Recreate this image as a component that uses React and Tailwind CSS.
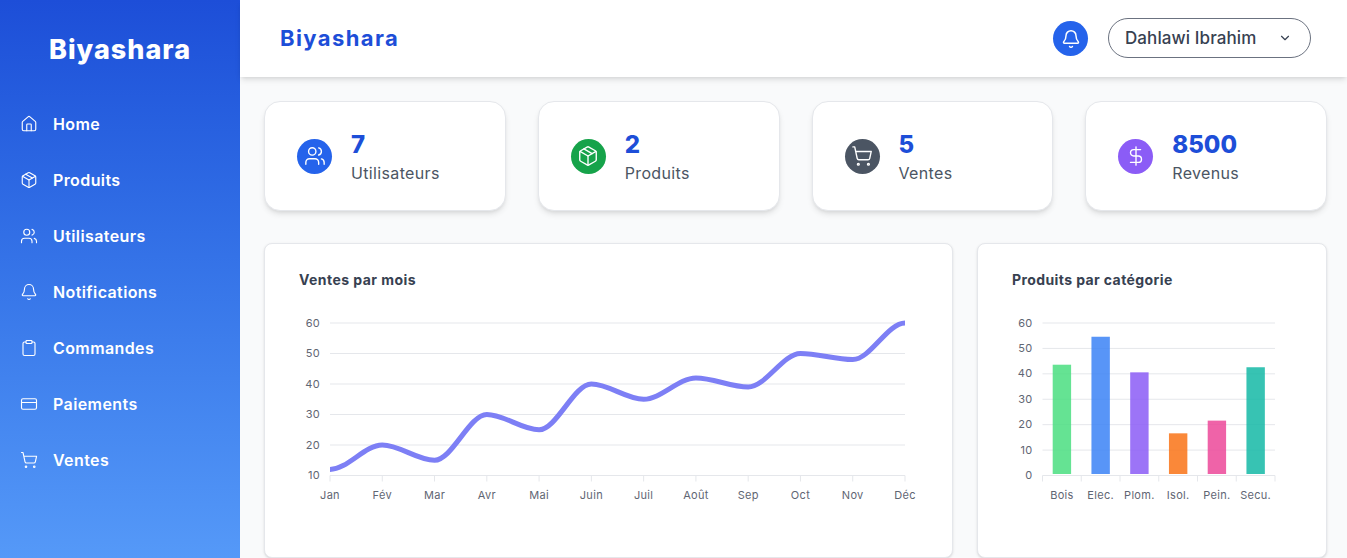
import { Bell, ChevronDown, Clipboard, CreditCard, DollarSign, House, Package, ShoppingCart, Users } from 'lucide-react';

const navItems = [
  { label: 'Home', icon: House },
  { label: 'Produits', icon: Package },
  { label: 'Utilisateurs', icon: Users },
  { label: 'Notifications', icon: Bell },
  { label: 'Commandes', icon: Clipboard },
  { label: 'Paiements', icon: CreditCard },
  { label: 'Ventes', icon: ShoppingCart },
];

const stats = [
  { value: '7', label: 'Utilisateurs', icon: Users, color: 'bg-[#2563eb]' },
  { value: '2', label: 'Produits', icon: Package, color: 'bg-[#16a34a]' },
  { value: '5', label: 'Ventes', icon: ShoppingCart, color: 'bg-[#4b5563]' },
  { value: '8500', label: 'Revenus', icon: DollarSign, color: 'bg-[#8b5cf6]' },
];

const months = ['Jan', 'Fév', 'Mar', 'Avr', 'Mai', 'Juin', 'Juil', 'Août', 'Sep', 'Oct', 'Nov', 'Déc'];
const sales = [12, 20, 15, 30, 25, 40, 35, 42, 39, 50, 48, 60];

const bars = [
  { label: 'Bois', value: 43, color: '#4ade80' },
  { label: 'Elec.', value: 54, color: '#3b82f6' },
  { label: 'Plom.', value: 40, color: '#8b5cf6' },
  { label: 'Isol.', value: 16, color: '#f97316' },
  { label: 'Pein.', value: 21, color: '#ec4899' },
  { label: 'Secu.', value: 42, color: '#14b8a6' },
];

// monotone curve through the points, flat at both ends
function monotonePath(pts) {
  const n = pts.length;
  const dx = [];
  const slope = [];
  for (let i = 0; i < n - 1; i++) {
    dx[i] = pts[i + 1][0] - pts[i][0];
    slope[i] = (pts[i + 1][1] - pts[i][1]) / dx[i];
  }
  const sign = (v) => (v < 0 ? -1 : 1);
  const t = [];
  for (let i = 1; i < n - 1; i++) {
    const p = (slope[i - 1] * dx[i] + slope[i] * dx[i - 1]) / (dx[i - 1] + dx[i]);
    t[i] = (sign(slope[i - 1]) + sign(slope[i])) * Math.min(Math.abs(slope[i - 1]), Math.abs(slope[i]), 0.5 * Math.abs(p)) || 0;
  }
  t[0] = 0;
  t[n - 1] = 0;
  let d = `M${pts[0][0]},${pts[0][1]}`;
  for (let i = 0; i < n - 1; i++) {
    const h = dx[i] / 3;
    d += `C${pts[i][0] + h},${pts[i][1] + h * t[i]} ${pts[i + 1][0] - h},${pts[i + 1][1] - h * t[i + 1]} ${pts[i + 1][0]},${pts[i + 1][1]}`;
  }
  return d;
}

function LineChart() {
  const left = 31;
  const right = 606;
  const top = 13;
  const bottom = 165.5;
  const x = (i) => left + (i * (right - left)) / 11;
  const y = (v) => bottom - ((v - 10) / 50) * (bottom - top);
  const points = sales.map((v, i) => [x(i), y(v)]);

  return (
    <svg width="630" height="200" className="block">
      {[10, 20, 30, 40, 50, 60].map((v) => (
        <g key={v}>
          <line x1={left} x2={right} y1={y(v)} y2={y(v)} stroke="#e5e7eb" />
          <text x={left - 10} y={y(v) + 3.5} textAnchor="end" fontSize="11" letterSpacing="0.3" fill="#5f6673">{v}</text>
        </g>
      ))}
      {months.map((m, i) => (
        <g key={m}>
          <line x1={x(i)} x2={x(i)} y1={bottom} y2={bottom + 6} stroke="#e5e7eb" />
          <text x={x(i)} y={bottom + 23.5} textAnchor="middle" fontSize="11" letterSpacing="0.3" fill="#5f6673">{m}</text>
        </g>
      ))}
      <path d={monotonePath(points)} fill="none" stroke="#7d7ff5" strokeWidth="5" />
    </svg>
  );
}

function BarChart() {
  const left = 30.5;
  const right = 263;
  const top = 13;
  const bottom = 165.5;
  const band = (right - left) / 6;
  const y = (v) => bottom - (v / 60) * (bottom - top) - 1.5;

  return (
    <svg width="290" height="200" className="block">
      {[0, 10, 20, 30, 40, 50, 60].map((v) => {
        const lineY = bottom - (v / 60) * (bottom - top);
        return (
          <g key={v}>
            <line x1={left} x2={right} y1={lineY} y2={lineY} stroke="#e5e7eb" />
            <text x={left - 10} y={lineY + 3.5} textAnchor="end" fontSize="11" letterSpacing="0.3" fill="#5f6673">{v}</text>
          </g>
        );
      })}
      {bars.map((b, i) => (
        <g key={b.label}>
          <rect x={left + i * band + 10.2} y={y(b.value)} width="18.4" height={bottom - 1.5 - y(b.value)} fill={b.color} fillOpacity="0.85" />
          <text x={left + (i + 0.5) * band} y={bottom + 23.5} textAnchor="middle" fontSize="11" letterSpacing="0.3" fill="#5f6673">{b.label}</text>
        </g>
      ))}
      {[0, 1, 2, 3, 4, 5, 6].map((i) => (
        <line key={i} x1={left + i * band} x2={left + i * band} y1={bottom} y2={bottom + 6} stroke="#e5e7eb" />
      ))}
    </svg>
  );
}

export default function App() {
  return (
    <div className="flex h-[558px] overflow-hidden bg-[#f9fafb] font-['Inter',sans-serif]">
      {/* Sidebar */}
      <aside className="w-[240px] shrink-0 bg-gradient-to-b from-[#1d4ed8] to-[#5599f8] text-white">
        <div className="flex h-[96px] items-center justify-center pt-[4px]">
          <span className="text-[27px] font-extrabold tracking-[1px]">Biyashara</span>
        </div>
        <nav>
          {navItems.map(({ label, icon: Icon }) => (
            <div key={label} className="flex h-14 items-center gap-[15px] pl-5">
              <Icon size={18} strokeWidth={1.5} />
              <span className="text-base font-semibold tracking-[0.4px]">{label}</span>
            </div>
          ))}
        </nav>
      </aside>

      <div className="min-w-0 flex-1">
        {/* Header */}
        <header className="relative flex h-[77px] items-center justify-between bg-white pl-10 pr-9 shadow-md">
          <span className="text-[22px] font-bold tracking-[1.4px] text-[#1d4ed8]">Biyashara</span>
          <div className="flex items-center gap-5">
            <div className="flex h-[35px] w-[35px] items-center justify-center rounded-full bg-[#2563eb] text-white">
              <Bell size={20} strokeWidth={1.75} />
            </div>
            <div className="mb-[2px] flex h-10 w-[203px] items-center justify-between rounded-full border border-[#6b7280] pl-4 pr-[18px] text-[#374151]">
              <span className="mt-[2px] text-[17px] font-medium tracking-[0.1px]">Dahlawi Ibrahim</span>
              <ChevronDown size={14} />
            </div>
          </div>
        </header>

        <main className="pl-6 pr-5 pt-6">
          {/* Stat cards */}
          <div className="grid grid-cols-4 gap-8">
            {stats.map(({ value, label, icon: Icon, color }) => (
              <div key={label} className="flex h-[110px] items-center gap-[19px] rounded-2xl border border-[#e5e7eb] bg-white pl-8 shadow-md">
                <div className={`flex h-[35px] w-[35px] items-center justify-center rounded-full text-white ${color}`}>
                  <Icon size={22} strokeWidth={1.5} />
                </div>
                <div>
                  <div className="pt-[2px] text-2xl leading-8 font-extrabold text-[#1d4ed8]">{value}</div>
                  <div className="text-base leading-6 tracking-[0.35px] text-[#4b5563]">{label}</div>
                </div>
              </div>
            ))}
          </div>

          {/* Charts */}
          <div className="mt-8 grid grid-cols-[689px_1fr] gap-6">
            <section className="h-[315px] rounded-lg border border-[#e5e7eb] bg-white shadow-sm">
              <h2 className="pl-[34px] pt-[26px] text-sm leading-5 font-bold tracking-[0.45px] text-[#374151]">Ventes par mois</h2>
              <div className="pl-[34px] pt-[20px]">
                <LineChart />
              </div>
            </section>
            <section className="h-[315px] rounded-lg border border-[#e5e7eb] bg-white shadow-sm">
              <h2 className="pl-[34px] pt-[26px] text-sm leading-5 font-bold tracking-[0.4px] text-[#374151]">Produits par catégorie</h2>
              <div className="pl-[34px] pt-[20px]">
                <BarChart />
              </div>
            </section>
          </div>
        </main>
      </div>
    </div>
  );
}
